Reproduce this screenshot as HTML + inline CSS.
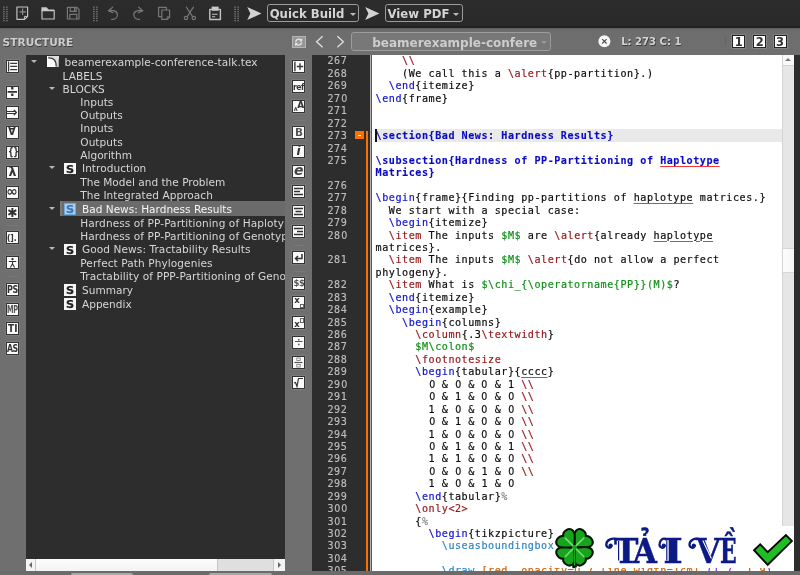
<!DOCTYPE html>
<html><head><meta charset="utf-8"><title>Texmaker</title>
<style>
html,body{margin:0;padding:0}
body{width:800px;height:575px;overflow:hidden;position:relative;background:#6f6f6f;font-family:"DejaVu Sans","Liberation Sans",sans-serif;}
#app{position:absolute;left:0;top:0;width:800px;height:575px;overflow:hidden;will-change:transform}
#app div,#app span,#app svg{position:absolute}
#tb{left:0;top:0;width:800px;height:27.5px;background:linear-gradient(#2c2c2c 0,#2a2a2a 25.5px,#1f1f1f 26.5px,#222 27.5px);}
#tb2{left:0;top:27.5px;width:800px;height:27px;background:linear-gradient(#5a5a5a 0,#6d6d6d 2px,#6f6f6f)}
.grip{width:5px;height:15px;top:6px;background-image:radial-gradient(circle,#8a8a8a 0.7px,transparent 1px);background-size:2.5px 2.2px}
.cb{border:1px solid #9c9c9c;border-radius:2.8px;box-sizing:border-box;color:#d4d4d4;font-weight:bold;white-space:nowrap}
.cb span{position:absolute}
.dar{width:0;height:0;border-left:3px solid transparent;border-right:3px solid transparent;border-top:3.5px solid #bbb}
#tree{left:25.6px;top:54.6px;width:259.6px;height:504.2px;background:#2d2d2d;overflow:hidden}
#treein{left:-25.6px;top:-54.6px;width:400px;height:575px}
.tt{font-size:10.55px;line-height:13.44px;height:13.44px;color:#d6d6d6;white-space:nowrap}
.tsel{left:60px;width:240px;height:13.4px;background:linear-gradient(90deg,#7a7a7a 0,#7a7a7a 2px,#6b6b6b 2px)}
.tarr{width:0;height:0;border-left:3px solid transparent;border-right:3px solid transparent;border-top:3.5px solid #b8b8b8}
.sic{width:12.2px;height:11.7px;background:#f6f6f6;color:#1e1e1e;font-weight:bold;font-size:11.3px;line-height:13px;text-align:center;overflow:hidden;-webkit-text-stroke:0.25px currentColor}
.sics{background:#a8cff0;color:#3d7ab6;box-shadow:inset 0 0 0 1px #6ea8da}
.tts{color:#f6f6f6}
.ib{width:11px;height:11px;background:#fafafa;border:1px solid #333;box-shadow:0 0 0 0.5px #8a8a8a;color:#333;overflow:hidden;font-size:9px;line-height:11px}
.ib span{white-space:nowrap;line-height:1.2}
.nb{top:35.2px;width:11px;height:10.4px;border:1px solid #222;background:#fff;color:#333;font-weight:bold;font-size:11.5px;line-height:12.8px;text-align:center;box-shadow:0 0 0 0.5px #999;overflow:hidden}
.wt{top:524.5px;font-family:'DejaVu Serif','Liberation Serif',serif;font-weight:bold;font-size:34.2px;line-height:52px;color:#0b1a84;transform-origin:0 0;white-space:nowrap;-webkit-text-stroke:0.5px #0b1a84}
.sep{width:11px;height:1px;background:#777}
#gut{left:312.4px;top:54.6px;width:57.2px;height:520.4px;background:#2d2d2d}
#ed{left:372.2px;top:54.6px;width:410.4px;height:520.4px;background:#fff;overflow:hidden}
#edin{left:-372.2px;top:-54.6px;width:800px;height:575px}
.ln{left:312.4px;width:34.9px;text-align:right;font:10.1px/12.45px "DejaVu Sans Mono","Liberation Mono",monospace;letter-spacing:0.54px;color:#bebebe;-webkit-text-stroke:0.15px currentColor}
.cl{left:375.6px;font:10.1px/12.45px "DejaVu Sans Mono","Liberation Mono",monospace;letter-spacing:0.54px;color:#0c0c0c;white-space:pre;height:12.45px;-webkit-text-stroke:0.18px currentColor}
.cl .b{-webkit-text-stroke:0.12px currentColor}
.cl span,.ln span{position:static !important}
.z{font-family:"DejaVu Sans","Liberation Sans",sans-serif;display:inline-block;width:6.62px;text-align:center;letter-spacing:0;transform:scaleX(0.94)}
.hl{left:375px;width:408px;height:12.5px;background:#e9e9e9}
.k{color:#1010d0} .r{color:#941418} .g{color:#0f8f17} .c{color:#8a8a8a} .t{color:#2f86c2} .o{color:#c8640f} .p{color:#8a2be2}
.b{color:#0a0ac6;font-weight:bold}
.u{text-decoration:underline;text-decoration-color:#ee383c;text-decoration-thickness:1.05px;text-underline-offset:1.9px}
</style></head><body><div id="app">
<div id="tb"></div>
<div id="tb2"></div>
<svg id="tbsvg" style="left:0;top:0" width="800" height="28" viewBox="0 0 800 28">
<g fill="none" stroke="#c4c4c4" stroke-width="1.15" stroke-linejoin="round">
<!-- new -->
<path d="M16.9 7H27.6V16.6L24.6 19.3H16.9Z"/>
<path d="M24.4 19.3V16.4H27.6" stroke-width="1"/>
<path d="M22.6 8.6V15M19.4 11.8H25.8" stroke="#8c8c8c" stroke-width="1.2"/>
<!-- open -->
<path d="M42 10.6H54.2V19H42Z"/>
<path d="M41.4 11V7.3H46.6L48.6 9.6H54.2V11Z" fill="#c9c9c9" stroke="none"/>
<!-- paste -->
<path d="M209.8 9.4H220.4V19.5H209.8Z" stroke-width="1.4"/>
<path d="M211.6 6.6H218.6V10.8H211.6Z" fill="#c9c9c9" stroke="none"/>
<path d="M212 14.2H217.6M212 16.8H215.2" stroke-width="1.1"/>
</g>
<g fill="none" stroke="#767676" stroke-width="1.2" stroke-linejoin="round" stroke-linecap="round">
<!-- save -->
<path d="M67.4 7.3H77L79 9.4V19H67.4Z"/>
<path d="M70.2 7.5V11.4H76.2V7.5M74.6 8.2V10.4M69.8 19V14.4H76.8V19"/>
<!-- undo -->
<path d="M112.6 7.2L108.4 10.6L112.8 12.6"/>
<path d="M108.6 10.6C113.5 9.6 117.6 11.6 117.4 15C117.2 18 114.6 19.6 111.6 19.4"/>
<!-- redo -->
<path d="M138.6 7.2L142.8 10.6L138.4 12.6"/>
<path d="M142.6 10.6C137.700 9.6 133.600 11.6 133.800 15C134 18 136.600 19.6 139.600 19.400"/>
<!-- copy -->
<path d="M158.600 7.4H166.400V16.600H158.600Z"/>
<path d="M161.800 10H169.600V17L167.200 19.400H161.800Z" fill="#2a2a2a"/>
<path d="M167 19.2V16.800H169.600" stroke-width="0.9"/>
<!-- cut -->
<path d="M186.400 7.200L192.600 16.600M193.400 7.200L187.200 16.600"/>
<circle cx="186" cy="18" r="1.700"/><circle cx="193.800" cy="18" r="1.700"/>
</g>
<g fill="#7c7c7c"><rect x="3.20" y="6.50" width="1.400" height="1.300"/><rect x="6.20" y="6.50" width="1.400" height="1.300"/><rect x="3.20" y="8.75" width="1.400" height="1.300"/><rect x="6.20" y="8.75" width="1.400" height="1.300"/><rect x="3.20" y="11.00" width="1.400" height="1.300"/><rect x="6.20" y="11.00" width="1.400" height="1.300"/><rect x="3.20" y="13.25" width="1.400" height="1.300"/><rect x="6.20" y="13.25" width="1.400" height="1.300"/><rect x="3.20" y="15.50" width="1.400" height="1.300"/><rect x="6.20" y="15.50" width="1.400" height="1.300"/><rect x="3.20" y="17.75" width="1.400" height="1.300"/><rect x="6.20" y="17.75" width="1.400" height="1.300"/><rect x="3.20" y="20.00" width="1.400" height="1.300"/><rect x="6.20" y="20.00" width="1.400" height="1.300"/></g><g fill="#7c7c7c"><rect x="93.20" y="6.50" width="1.400" height="1.300"/><rect x="96.20" y="6.50" width="1.400" height="1.300"/><rect x="93.20" y="8.75" width="1.400" height="1.300"/><rect x="96.20" y="8.75" width="1.400" height="1.300"/><rect x="93.20" y="11.00" width="1.400" height="1.300"/><rect x="96.20" y="11.00" width="1.400" height="1.300"/><rect x="93.20" y="13.25" width="1.400" height="1.300"/><rect x="96.20" y="13.25" width="1.400" height="1.300"/><rect x="93.20" y="15.50" width="1.400" height="1.300"/><rect x="96.20" y="15.50" width="1.400" height="1.300"/><rect x="93.20" y="17.75" width="1.400" height="1.300"/><rect x="96.20" y="17.75" width="1.400" height="1.300"/><rect x="93.20" y="20.00" width="1.400" height="1.300"/><rect x="96.20" y="20.00" width="1.400" height="1.300"/></g><g fill="#7c7c7c"><rect x="234.40" y="6.50" width="1.400" height="1.300"/><rect x="237.40" y="6.50" width="1.400" height="1.300"/><rect x="234.40" y="8.75" width="1.400" height="1.300"/><rect x="237.40" y="8.75" width="1.400" height="1.300"/><rect x="234.40" y="11.00" width="1.400" height="1.300"/><rect x="237.40" y="11.00" width="1.400" height="1.300"/><rect x="234.40" y="13.25" width="1.400" height="1.300"/><rect x="237.40" y="13.25" width="1.400" height="1.300"/><rect x="234.40" y="15.50" width="1.400" height="1.300"/><rect x="237.40" y="15.50" width="1.400" height="1.300"/><rect x="234.40" y="17.75" width="1.400" height="1.300"/><rect x="237.40" y="17.75" width="1.400" height="1.300"/><rect x="234.40" y="20.00" width="1.400" height="1.300"/><rect x="237.40" y="20.00" width="1.400" height="1.300"/></g>
<!-- build arrows -->
<path d="M247.200 7L261.400 13.500L247.200 20L250.400 13.500Z" fill="#d2d2d2"/>
<path d="M365.200 7L379.400 13.500L365.200 20L368.400 13.500Z" fill="#d2d2d2"/>
</svg>
<div class="cb" style="left:267px;top:4.100px;width:92.400px;height:18.400px;font-size:11.700px"><span style="left:1.700px;top:1.900px">Quick Build</span><div class="dar" style="left:81.500px;top:7.600px"></div></div>
<div class="cb" style="left:385px;top:4.100px;width:77.800px;height:18.400px;font-size:11.700px"><span style="left:1.500px;top:1.900px">View PDF</span><div class="dar" style="left:66.600px;top:7.600px"></div></div>
<!-- second bar -->
<div style="left:2.600px;top:35px;font-size:10.550px;font-weight:bold;color:#cdcdcd;text-shadow:0.600px 0.900px 0.500px #3c3c3c;letter-spacing:0.040px;line-height:14px">STRUCTURE</div>
<div style="left:292.400px;top:35.600px;width:11.200px;height:10.200px;border:1px solid #b5b5b5;background:#969696"><svg style="left:0;top:0" width="11.200" height="10.200" viewBox="0 0 11.200 10.200"><path d="M2.600 4.800A3.200 3.100 0 0 1 8.200 3.200M8.600 5.400A3.200 3.100 0 0 1 3 7" fill="none" stroke="#e4e4e4" stroke-width="1.400"/><path d="M9.200 1V4.400H6ZM2 9.200V5.800H5.200Z" fill="#e4e4e4"/></svg></div>
<svg style="left:314px;top:34px" width="34" height="16" viewBox="0 0 34 16"><path d="M8.600 2.200L2.600 7.700L8.600 13.200M23.400 2.200L29.400 7.700L23.400 13.200" fill="none" stroke="#e0e0e0" stroke-width="1.300"/></svg>
<div class="cb" style="left:351.400px;top:32px;width:199.400px;height:18.800px;font-size:12px;background:#787878;border-color:#9c9c9c;color:#cdcdcd"><span style="left:19.800px;top:2.500px">beamerexample-confere</span><div class="dar" style="left:188.600px;top:7.700px;border-top-color:#9a9a9a"></div></div>
<svg style="left:597px;top:34px" width="15" height="15" viewBox="0 0 15 15"><circle cx="7.400" cy="7.300" r="6" fill="#f6f6f6"/><path d="M5.200 5.100L9.600 9.500M9.600 5.100L5.200 9.500" stroke="#4c4c4c" stroke-width="1.100"/></svg>
<div style="left:621.200px;top:35px;font-size:10.050px;color:#d2d2d2;line-height:14px;text-shadow:0.600px 0.900px 0.400px #3a3a3a;font-weight:bold;white-space:nowrap">L: 273 C: 1</div>
<div style="left:725px;top:37px;width:1px;height:9px;background:#646464"></div>
<div class="nb" style="left:732.200px">1</div>
<div class="nb" style="left:753.200px">2</div>
<div class="nb" style="left:773.600px">3</div>

<div id="tree"><div id="treein">
<div class="tarr" style="left:31.25px;top:59.96px"></div>
<svg class="ticon" style="left:46.6px;top:56.10px" width="12.4" height="11.4" viewBox="0 0 12.4 11.4"><rect x="0" y="0" width="12.4" height="11.4" fill="#fbfbfb"/><path d="M1.2 1.6C6.5 1.4 9.3 4 9.2 11.4H12.4V0H1.2Z" fill="#dcdcdc"/><path d="M1.2 1.8C6.6 1.6 9.3 4.2 9.2 10.6" fill="none" stroke="#3c3c3c" stroke-width="1.25"/><path d="M9.8 10.2H12M11.6 3V10.4" fill="none" stroke="#8a8a8a" stroke-width="0.7"/></svg>
<div class="tt" style="left:64.4px;top:54.75px;height:14.12px;line-height:14.12px;letter-spacing:0.04px">beamerexample-conference-talk.tex</div>
<div class="tt" style="left:62.6px;top:69.72px;height:13.18px;line-height:13.18px">LABELS</div>
<div class="tarr" style="left:48.9px;top:86.79px"></div>
<div class="tt" style="left:62.6px;top:82.90px;height:13.18px;line-height:13.18px;letter-spacing:0.04px">BLOCKS</div>
<div class="tt" style="left:80.3px;top:96.08px;height:13.18px;line-height:13.18px;letter-spacing:0.04px">Inputs</div>
<div class="tt" style="left:80.3px;top:109.26px;height:13.18px;line-height:13.18px;letter-spacing:0.04px">Outputs</div>
<div class="tt" style="left:80.3px;top:122.44px;height:13.18px;line-height:13.18px;letter-spacing:0.04px">Inputs</div>
<div class="tt" style="left:80.3px;top:135.62px;height:13.18px;line-height:13.18px;letter-spacing:0.04px">Outputs</div>
<div class="tt" style="left:80.3px;top:148.80px;height:13.18px;line-height:13.18px">Algorithm</div>
<div class="tarr" style="left:48.9px;top:166.34px"></div>
<div class="sic" style="left:64px;top:162.68px">S</div>
<div class="tt" style="left:82px;top:161.13px;height:14.12px;line-height:14.12px;letter-spacing:0.04px">Introduction</div>
<div class="tt" style="left:80.3px;top:176.10px;height:13.18px;line-height:13.18px">The Model and the Problem</div>
<div class="tt" style="left:80.3px;top:189.28px;height:13.18px;line-height:13.18px;letter-spacing:0.04px">The Integrated Approach</div>
<div class="tsel" style="top:201.46px;height:14.12px"></div>
<div class="tarr" style="left:48.9px;top:206.82px"></div>
<div class="sic sics" style="left:64px;top:203.16px">S</div>
<div class="tt tts" style="left:82px;top:201.61px;height:14.12px;line-height:14.12px">Bad News: Hardness Results</div>
<div class="tt" style="left:80.3px;top:216.58px;height:13.18px;line-height:13.18px;letter-spacing:0.085px">Hardness of PP-Partitioning of Haplotype Matrices</div>
<div class="tt" style="left:80.3px;top:229.76px;height:13.18px;line-height:13.18px;letter-spacing:0.085px">Hardness of PP-Partitioning of Genotype Matrices</div>
<div class="tarr" style="left:48.9px;top:247.30px"></div>
<div class="sic" style="left:64px;top:243.64px">S</div>
<div class="tt" style="left:82px;top:242.09px;height:14.12px;line-height:14.12px;letter-spacing:0.085px">Good News: Tractability Results</div>
<div class="tt" style="left:80.3px;top:257.06px;height:13.18px;line-height:13.18px;letter-spacing:0.085px">Perfect Path Phylogenies</div>
<div class="tt" style="left:80.3px;top:270.24px;height:13.18px;line-height:13.18px;letter-spacing:0.085px">Tractability of PPP-Partitioning of Genotype Matrices</div>
<div class="sic" style="left:64px;top:284.12px">S</div>
<div class="tt" style="left:82px;top:282.57px;height:14.12px;line-height:14.12px">Summary</div>
<div class="sic" style="left:64px;top:298.24px">S</div>
<div class="tt" style="left:82px;top:296.69px;height:14.12px;line-height:14.12px">Appendix</div>
</div></div>
<!--TREESCROLL-->
<div class="ib" style="left:6px;top:59.9px;"><svg width="11" height="11" viewBox="0 0 11 11"><path d="M1.6 0.5V10.5M3.2 2.3H10.2M3.2 5.4H10.2M3.2 8.5H10.2" stroke="#3a3a3a" stroke-width="1.25" fill="none"/></svg></div>
<div class="ib" style="left:6px;top:85.9px;"><span style="font-size:15px;font-weight:bold;top:-4.3px;left:-1px">÷</span></div>
<div class="ib" style="left:6px;top:105.9px;"><span style="font-size:13.5px;font-weight:bold;top:-3px;left:-0.7px">⇒</span></div>
<div class="ib" style="left:6px;top:125.9px;"><span style="font-size:11.5px;font-weight:bold;top:-1.6px;left:1.4px;transform:scaleX(0.88);transform-origin:0 0">∀</span></div>
<div class="ib" style="left:6px;top:145.9px;"><span style="font-size:10px;font-weight:bold;top:-1.3px;left:0.9px;letter-spacing:-0.5px;transform:scaleX(0.8);transform-origin:0 0">{}</span></div>
<div class="ib" style="left:6px;top:165.9px;"><span style="font-size:12.5px;font-weight:bold;top:-2.6px;left:1.4px">λ</span></div>
<div class="ib" style="left:6px;top:185.9px;"><span style="font-size:14px;font-weight:bold;top:-4px;left:-0.8px">∞</span></div>
<div class="ib" style="left:6px;top:205.9px;"><span style="font-size:12.5px;top:-2.2px;left:0.3px">✱</span></div>
<div class="ib" style="left:6px;top:231.1px;"><span style="font-size:9.5px;font-weight:bold;top:-0.4px;left:0.4px;letter-spacing:-0.2px;transform:scaleX(0.8);transform-origin:0 0">(].</span></div>
<div class="ib" style="left:6px;top:256.4px;"><svg width="11" height="11" viewBox="0 0 11 11"><circle cx="5.5" cy="2.1" r="1.2" fill="#333"/><path d="M1.8 4.5H9.2M5.5 4.2V7M5.5 6.8L3.4 10.4M5.5 6.8L7.6 10.4" stroke="#333" stroke-width="1.05" fill="none"/></svg></div>
<div class="ib" style="left:6px;top:282.7px;"><span style="font-size:10px;font-weight:bold;top:0px;left:0.2px;letter-spacing:-0.5px;transform:scaleX(0.8);transform-origin:0 0">PS</span></div>
<div class="ib" style="left:6px;top:302.7px;"><span style="font-size:10px;font-weight:bold;top:0px;left:0px;letter-spacing:-0.6px;transform:scaleX(0.66);transform-origin:0 0;color:#555">MP</span></div>
<div class="ib" style="left:6px;top:322.4px;"><span style="font-size:10px;font-weight:bold;top:0px;left:1.4px;letter-spacing:0px;transform:scaleX(0.9);transform-origin:0 0">TI</span></div>
<div class="ib" style="left:6px;top:342.4px;"><span style="font-size:10px;font-weight:bold;top:0px;left:0px;letter-spacing:-0.6px;transform:scaleX(0.78);transform-origin:0 0">AS</span></div>
<div class="sep" style="left:7px;top:79.8px"></div>
<div class="sep" style="left:7px;top:224.6px"></div>
<div class="sep" style="left:7px;top:250.2px"></div>
<div class="sep" style="left:7px;top:276.2px"></div>
<div class="ib" style="left:292.3px;top:60.3px;"><svg width="11" height="11" viewBox="0 0 11 11"><path d="M1.9 0.8V10.2M3.8 5.5H10.2M7 2.3V8.700" stroke="#3a3a3a" stroke-width="1.4" fill="none"/></svg></div>
<div class="ib" style="left:292.3px;top:80.1px;"><span style="font-size:8.5px;font-weight:bold;top:0.5px;left:0px;letter-spacing:-0.5px;transform:scaleX(0.9);transform-origin:0 0">ref</span></div>
<div class="ib" style="left:292.3px;top:99.6px;"><span style="font-size:5px;font-weight:bold;top:5px;left:0.5px">A</span><span style="font-size:9px;font-weight:bold;top:-0.5px;left:4px">A</span></div>
<div class="ib" style="left:292.3px;top:125.7px;"><span style="font-size:10.5px;font-weight:bold;top:-1px;left:1.8px;color:#555">B</span></div>
<div class="ib" style="left:292.3px;top:145.3px;"><span style="font-size:12px;font-weight:bold;font-style:italic;top:-2.4px;left:3.2px">i</span></div>
<div class="ib" style="left:292.3px;top:165.3px;"><span style="font-size:14px;font-weight:bold;font-style:italic;top:-4.6px;left:0.6px;color:#444">e</span></div>
<div class="ib" style="left:292.3px;top:185.10000000000002px;"><svg width="11" height="11" viewBox="0 0 11 11"><path d="M1 2.5H10M1 5.5H7M1 8.5H10" stroke="#333" stroke-width="1.4" fill="none"/></svg></div>
<div class="ib" style="left:292.3px;top:205.0px;"><svg width="11" height="11" viewBox="0 0 11 11"><path d="M1 2.5H10M2.5 5.5H8.5M1 8.5H10" stroke="#333" stroke-width="1.4" fill="none"/></svg></div>
<div class="ib" style="left:292.3px;top:225.0px;"><svg width="11" height="11" viewBox="0 0 11 11"><path d="M1 2.5H10M4 5.5H10M1 8.5H10" stroke="#333" stroke-width="1.4" fill="none"/></svg></div>
<div class="ib" style="left:292.3px;top:251.10000000000002px;"><svg width="11" height="11" viewBox="0 0 11 11"><path d="M9 2V6.5H3M5 4L2.5 6.5L5 9" stroke="#333" stroke-width="1.5" fill="none"/></svg></div>
<div class="ib" style="left:292.3px;top:276.7px;"><span style="font-size:8.5px;font-weight:bold;top:0.3px;left:0.3px;letter-spacing:-0.4px;color:#555">$$</span></div>
<div class="ib" style="left:292.3px;top:296.3px;"><span style="font-size:8.5px;font-weight:bold;top:-2px;left:1px">x</span><span style="position:absolute;left:6.5px;top:6.5px;width:2.5px;height:2.5px;border:0.8px solid #666"></span></div>
<div class="ib" style="left:292.3px;top:316.3px;"><span style="font-size:8.5px;font-weight:bold;top:1.5px;left:1px">x</span><span style="position:absolute;left:6.5px;top:1px;width:2.5px;height:2.5px;border:0.8px solid #666"></span></div>
<div class="ib" style="left:292.3px;top:336.0px;"><span style="font-size:12px;top:-2.5px;left:0.5px;color:#555">÷</span></div>
<div class="ib" style="left:292.3px;top:355.5px;"><svg width="11" height="11" viewBox="0 0 11 11"><path d="M1.5 5.5H9.5" stroke="#555" stroke-width="1.2"/><rect x="3.8" y="1" width="3.4" height="2.5" fill="none" stroke="#777" stroke-width="0.8"/><rect x="3.8" y="7.5" width="3.4" height="2.5" fill="none" stroke="#777" stroke-width="0.8"/></svg></div>
<div class="ib" style="left:292.3px;top:375.8px;"><svg width="11" height="11" viewBox="0 0 11 11"><path d="M1 6L2.5 5.5L4 9.5L5.5 1.5H10" stroke="#333" stroke-width="1.2" fill="none"/></svg></div>
<div class="sep" style="left:293.5px;top:120.4px"></div>
<div class="sep" style="left:293.5px;top:245.4px"></div>
<div class="sep" style="left:293.5px;top:270.7px"></div>
<div id="gut"></div>
<div class="ln" style="top:55.45px">267</div>
<div class="ln" style="top:67.89px">268</div>
<div class="ln" style="top:80.32px">269</div>
<div class="ln" style="top:92.76px">27<span class="z">0</span></div>
<div class="ln" style="top:105.19px">271</div>
<div class="ln" style="top:117.63px">272</div>
<div class="ln" style="top:130.06px">273</div>
<div class="ln" style="top:142.50px">274</div>
<div class="ln" style="top:154.93px">275</div>
<div class="ln" style="top:179.80px">276</div>
<div class="ln" style="top:192.24px">277</div>
<div class="ln" style="top:204.67px">278</div>
<div class="ln" style="top:217.11px">279</div>
<div class="ln" style="top:229.54px">28<span class="z">0</span></div>
<div class="ln" style="top:254.41px">281</div>
<div class="ln" style="top:279.28px">282</div>
<div class="ln" style="top:291.72px">283</div>
<div class="ln" style="top:304.15px">284</div>
<div class="ln" style="top:316.58px">285</div>
<div class="ln" style="top:329.02px">286</div>
<div class="ln" style="top:341.45px">287</div>
<div class="ln" style="top:353.89px">288</div>
<div class="ln" style="top:366.32px">289</div>
<div class="ln" style="top:378.76px">29<span class="z">0</span></div>
<div class="ln" style="top:391.19px">291</div>
<div class="ln" style="top:403.63px">292</div>
<div class="ln" style="top:416.06px">293</div>
<div class="ln" style="top:428.50px">294</div>
<div class="ln" style="top:440.94px">295</div>
<div class="ln" style="top:453.37px">296</div>
<div class="ln" style="top:465.81px">297</div>
<div class="ln" style="top:478.24px">298</div>
<div class="ln" style="top:490.68px">299</div>
<div class="ln" style="top:503.11px">3<span class="z">0</span><span class="z">0</span></div>
<div class="ln" style="top:515.54px">3<span class="z">0</span>1</div>
<div class="ln" style="top:527.98px">3<span class="z">0</span>2</div>
<div class="ln" style="top:540.41px">3<span class="z">0</span>3</div>
<div class="ln" style="top:552.85px">3<span class="z">0</span>4</div>
<div class="ln" style="top:565.28px">3<span class="z">0</span>5</div>
<div style="left:369.5px;top:54.6px;width:2.7px;height:521px;background:linear-gradient(90deg,#b2b2b2 0,#b2b2b2 1px,#585858 1px,#585858 1.9px,#cfcfcf 1.9px)"></div>
<div style="left:365.9px;top:130.7px;width:2.2px;height:445px;background:#fb7000"></div>
<div style="left:354.9px;top:130.9px;width:8.9px;height:8.2px;background:#fb7000"><div style="left:2.7px;top:3.7px;width:3.5px;height:1.5px;background:#fff"></div></div>
<div id="ed"><div id="edin">
<div class="cl" style="top:55.45px">    <span class="r">\\</span></div>
<div class="cl" style="top:67.89px">    (We call this a <span class="r">\alert</span>{pp-partition}.)</div>
<div class="cl" style="top:80.32px">  <span class="k">\end</span>{itemize}</div>
<div class="cl" style="top:92.76px"><span class="k">\end</span>{frame}</div>
<div class="hl" style="top:129px"></div>
<div class="cl" style="top:130.06px"><span class="b">\section{Bad News: Hardness Results}</span></div>
<div class="cl" style="top:154.93px"><span class="b">\subsection{Hardness of PP-Partitioning of </span><span class="b u">Haplotype</span></div>
<div class="cl" style="top:167.37px"><span class="b">Matrices}</span></div>
<div class="cl" style="top:192.24px"><span class="k">\begin</span>{frame}{Finding pp-partitions of <span class="u">haplotype</span> matrices.}</div>
<div class="cl" style="top:204.67px">  We start with a special case:</div>
<div class="cl" style="top:217.11px">  <span class="k">\begin</span>{itemize}</div>
<div class="cl" style="top:229.54px">  <span class="r">\item</span> The inputs <span class="g">$M$</span> are <span class="r">\alert</span>{already <span class="u">haplotype</span></div>
<div class="cl" style="top:241.98px">matrices}.</div>
<div class="cl" style="top:254.41px">  <span class="r">\item</span> The inputs <span class="g">$M$</span> <span class="r">\alert</span>{do not allow a perfect</div>
<div class="cl" style="top:266.85px">phylogeny}.</div>
<div class="cl" style="top:279.28px">  <span class="r">\item</span> What is <span class="g">$\chi_{\operatorname{PP}}(M)$</span>?</div>
<div class="cl" style="top:291.72px">  <span class="k">\end</span>{itemize}</div>
<div class="cl" style="top:304.15px">  <span class="k">\begin</span>{example}</div>
<div class="cl" style="top:316.58px">    <span class="k">\begin</span>{columns}</div>
<div class="cl" style="top:329.02px">      <span class="r">\column</span>{.3<span class="r">\textwidth</span>}</div>
<div class="cl" style="top:341.45px">      <span class="g">$M\colon$</span></div>
<div class="cl" style="top:353.89px">      <span class="r">\footnotesize</span></div>
<div class="cl" style="top:366.32px">      <span class="k">\begin</span>{tabular}{<span class="u">cccc</span>}</div>
<div class="cl" style="top:378.76px">        <span class="z">0</span> &amp; <span class="z">0</span> &amp; <span class="z">0</span> &amp; 1 <span class="r">\\</span></div>
<div class="cl" style="top:391.19px">        <span class="z">0</span> &amp; 1 &amp; <span class="z">0</span> &amp; <span class="z">0</span> <span class="r">\\</span></div>
<div class="cl" style="top:403.63px">        1 &amp; <span class="z">0</span> &amp; <span class="z">0</span> &amp; <span class="z">0</span> <span class="r">\\</span></div>
<div class="cl" style="top:416.06px">        <span class="z">0</span> &amp; 1 &amp; <span class="z">0</span> &amp; <span class="z">0</span> <span class="r">\\</span></div>
<div class="cl" style="top:428.50px">        1 &amp; <span class="z">0</span> &amp; <span class="z">0</span> &amp; <span class="z">0</span> <span class="r">\\</span></div>
<div class="cl" style="top:440.94px">        <span class="z">0</span> &amp; 1 &amp; <span class="z">0</span> &amp; 1 <span class="r">\\</span></div>
<div class="cl" style="top:453.37px">        1 &amp; 1 &amp; <span class="z">0</span> &amp; <span class="z">0</span> <span class="r">\\</span></div>
<div class="cl" style="top:465.81px">        <span class="z">0</span> &amp; <span class="z">0</span> &amp; 1 &amp; <span class="z">0</span> <span class="r">\\</span></div>
<div class="cl" style="top:478.24px">        1 &amp; <span class="z">0</span> &amp; 1 &amp; <span class="z">0</span></div>
<div class="cl" style="top:490.68px">      <span class="k">\end</span>{tabular}<span class="c">%</span></div>
<div class="cl" style="top:503.11px">      <span class="r">\only&lt;2&gt;</span></div>
<div class="cl" style="top:515.54px">      {<span class="c">%</span></div>
<div class="cl" style="top:527.98px">        <span class="k">\begin</span>{tikzpicture}</div>
<div class="cl" style="top:540.41px">          <span class="t">\useasboundingbox</span></div>
<div class="cl" style="top:565.28px">          <span class="t">\draw</span> <span class="o">[red, opacity=<span class="z">0</span>.7,line width=1cm]</span> <span class="p">(1.7,</span><span class="o">-1.9</span><span class="p">) -- (</span><span class="o">1.7,1</span><span class="p">);</span></div>
<div style="left:375.1px;top:129.1px;width:1.9px;height:12.5px;background:#111"></div>
</div></div>
<!-- vertical scrollbar -->
<div style="left:782.200px;top:54.600px;width:11.500px;height:472px;background:#e6e6e6;border-left:1px solid #d4d4d4;box-sizing:border-box"></div>
<div style="left:783.200px;top:54.600px;width:10.500px;height:11.400px;background:#f8f8f8;border-bottom:1px solid #d4d4d4;box-sizing:border-box"><div style="left:1.800px;top:3.900px;width:0;height:0;border-left:3.500px solid transparent;border-right:3.500px solid transparent;border-bottom:3.500px solid #7a7a7a"></div></div>
<div style="left:783.200px;top:248px;width:10.500px;height:25.200px;background:linear-gradient(90deg,#fdfdfd,#f6f6f6);border-top:1px solid #d6d6d6;border-bottom:1px solid #d6d6d6;box-sizing:border-box"></div>
<!-- right edge -->
<div style="left:793.700px;top:54.600px;width:6.400px;height:516.400px;background:#2d2d2d"></div>
<!-- tree h scrollbar -->
<div style="left:25.600px;top:558.700px;width:259.600px;height:12px;background:#dfdfdf"></div>
<div style="left:25.600px;top:558.700px;width:10.600px;height:12px;background:#f4f4f4;border-right:1px solid #c6c6c6;box-sizing:border-box"><div style="left:3.200px;top:3.400px;width:0;height:0;border-top:3.300px solid transparent;border-bottom:3.300px solid transparent;border-right:3.600px solid #666"></div></div>
<div style="left:36.400px;top:558.700px;width:182px;height:12px;background:linear-gradient(#fdfdfd,#f3f3f3);border-right:1px solid #c6c6c6;box-sizing:border-box"></div>
<div style="left:272.600px;top:558.700px;width:12.600px;height:12px;background:#f4f4f4;border-left:1px solid #c6c6c6;box-sizing:border-box"><div style="left:4.600px;top:3.400px;width:0;height:0;border-top:3.300px solid transparent;border-bottom:3.300px solid transparent;border-left:3.600px solid #666"></div></div>
<!-- bottom bar -->
<div style="left:0;top:570.800px;width:800px;height:4.200px;background:#6b6b6b"></div>
<div style="left:70.600px;top:573.300px;width:62.400px;height:2px;background:#a9a9a9;border-radius:2px 2px 0 0"></div>
<div style="left:208.800px;top:573.300px;width:63.600px;height:2px;background:#a9a9a9;border-radius:2px 2px 0 0"></div>
<!-- watermark -->
<div style="left:782.200px;top:567px;width:11.500px;height:4px;background:#fff"></div>
<div id="wm" style="left:554.500px;top:525.600px;width:239.200px;height:42.200px;background:#fff"></div>
<svg style="left:553px;top:525px" width="44" height="45" viewBox="553 525 44 45">
<g stroke="#061406" stroke-width="2" stroke-linejoin="round" fill="#18a31c">
<path d="M573.300 567.300C572.600 562 573.200 555 573.600 548L575.800 548C575.600 555 575.400 561 575.900 566.600Z"/>
<path transform="translate(574.5 547.3) rotate(45)" d="M0 0C-3.74 -4.96 -10.70 -7.43 -10.70 -13.10C-10.70 -18.41 -2.67 -19.82 0 -15.93C2.67 -19.82 10.70 -18.41 10.70 -13.10C10.70 -7.43 3.74 -4.96 0 0Z"/><path transform="translate(574.5 547.3) rotate(135)" d="M0 0C-3.74 -4.96 -10.70 -7.43 -10.70 -13.10C-10.70 -18.41 -2.67 -19.82 0 -15.93C2.67 -19.82 10.70 -18.41 10.70 -13.10C10.70 -7.43 3.74 -4.96 0 0Z"/><path transform="translate(574.5 547.3) rotate(225)" d="M0 0C-3.74 -4.96 -10.70 -7.43 -10.70 -13.10C-10.70 -18.41 -2.67 -19.82 0 -15.93C2.67 -19.82 10.70 -18.41 10.70 -13.10C10.70 -7.43 3.74 -4.96 0 0Z"/><path transform="translate(574.5 547.3) rotate(315)" d="M0 0C-3.74 -4.96 -10.70 -7.43 -10.70 -13.10C-10.70 -18.41 -2.67 -19.82 0 -15.93C2.67 -19.82 10.70 -18.41 10.70 -13.10C10.70 -7.43 3.74 -4.96 0 0Z"/>
</g>
<path d="M565.300 538.100L583.700 556.500M583.700 538.100L565.300 556.500" stroke="#74de78" stroke-width="1.600" fill="none" stroke-linecap="round"/>
<circle cx="574.5" cy="547.3" r="2.400" fill="#18a31c"/>
<path d="M574.600 549V565.500" stroke="#18a31c" stroke-width="1.300"/>
</svg>
<div class="wt" style="left:614.200px;transform:scaleX(0.960)">T</div>
<div class="wt" style="left:633.200px;transform:scaleX(0.900)">Ả</div>
<div class="wt" style="left:662.600px;transform:scaleX(1.250)">I</div>
<div class="wt" style="left:696.200px;transform:scaleX(0.930)">V</div>
<div class="wt" style="left:720.200px;transform:scaleX(0.640)">Ề</div>
<svg style="left:600px;top:530px" width="140" height="36" viewBox="600 530 140 36">
<g fill="none" stroke="#0b1a84" stroke-width="2.300" stroke-linecap="round">
<path d="M617 539.200C611.500 537.600 606.300 540.200 606.300 544.600C606.300 548 610.600 548.800 611.500 546"/>
<path d="M666 539.200C663 537.600 659.500 540.200 659.500 544.600C659.500 548 663.800 548.800 664.700 546"/>
<path d="M699.500 539.200C694.500 537.600 689.500 540.200 689.500 544.600C689.500 548 693.800 548.800 694.700 546"/>
</g>
<g fill="#0b1a84"><circle cx="610.600" cy="545.600" r="2.100"/><circle cx="663.800" cy="545.600" r="2.100"/><circle cx="693.800" cy="545.600" r="2.100"/></g>
<g stroke="#0b1a84" stroke-width="1.200" fill="none"><path d="M618.600 541V560.500M666.800 540.500V560.500"/></g><g stroke="#fff" stroke-width="1.100" fill="none"><path d="M702.800 540.500L711.400 558.500"/></g>
</svg>
<svg style="left:750px;top:531px" width="46" height="38" viewBox="750 531 46 38"><path d="M754.100 550.200L760.200 544.300L767.700 552.200L785.900 535L791.900 541.100L767.700 564.800Z" fill="#1fbe22" stroke="#080808" stroke-width="1.900" stroke-linejoin="miter"/></svg>

</div></body></html>
